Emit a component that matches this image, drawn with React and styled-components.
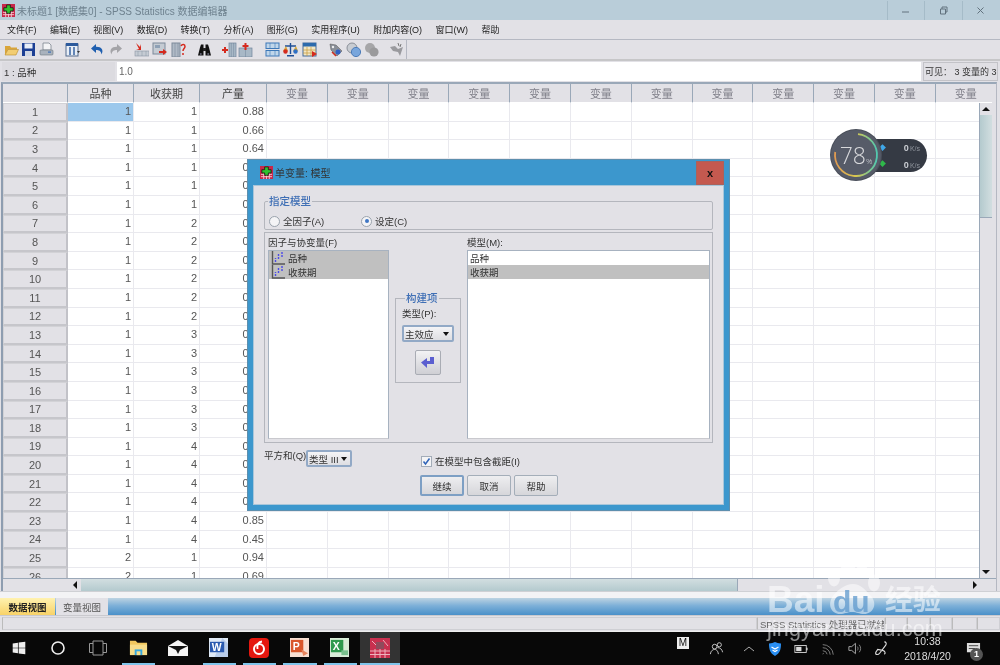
import React from 'react';
import styled, { createGlobalStyle } from 'styled-components';

const Global = createGlobalStyle`
  html, body { margin: 0; padding: 0; background: #e2e1e6; }
  * { box-sizing: border-box; }
`;
const CJK = `"Liberation Sans", "Noto Sans CJK SC", sans-serif`;

const Page = styled.div`
  position: relative; width: 1000px; height: 665px; overflow: hidden;
  display: flex; flex-direction: column; background: #e2e1e6;
  font-family: ${CJK}; filter: blur(0.45px);
`;
const TitleBar = styled.div`
  height: 20px; background: #b9cdd9; display: flex; align-items: center; padding-left: 2px; flex: none;
`;
const TitleText = styled.span`
  margin-left: 2px; font-size: 10px; color: #6f828f; white-space: nowrap;
`;
const WinButtons = styled.div`margin-left: auto; display: flex; height: 19px; padding-right: 1px;`;
const WinButton = styled.div`
  width: 37.5px; display: flex; align-items: center; justify-content: center;
  border-left: 1px solid #a5bbc8;
`;
const MenuBar = styled.div`
  height: 20px; flex: none; display: flex; align-items: center; gap: 13.4px; padding-left: 7px;
  border-bottom: 1px solid #b5b8c2; background: #e2e1e6;
`;
const MenuItem = styled.span`font-size: 9px; color: #222; white-space: nowrap;`;
const ToolBar = styled.div`
  height: 21px; flex: none; display: flex; align-items: center; padding-left: 4px;
  background: #e2e1e6; border-bottom: 2px solid #c6c6c8;
`;
const ToolIcon = styled.svg`width: 15px; height: 15px; flex: none; margin-left: ${p => p.$gap}px;`;
const ToolEnd = styled.div`width: 1px; height: 19px; background: #b5b8c2; margin-left: 2px;`;
const FormulaBar = styled.div`
  height: 21px; flex: none; display: flex; gap: 2px; padding: 1px 2px 1px 2px;
`;
const CellName = styled.div`
  width: 113px; background: #dcdbe0; font-size: 9.5px; color: #333; padding-left: 2px;
  display: flex; align-items: center;
`;
const CellValue = styled.div`
  flex: 1; background: #fff; font-size: 10px; color: #666; padding-left: 2px; display: flex; align-items: center;
`;
const VisibleInfo = styled.div`
  width: 75px; background: #e0dfe4; border: 1px solid #c3c3c8; font-size: 9px; color: #333;
  display: flex; align-items: center; padding-left: 1px; white-space: nowrap; overflow: hidden;
`;
const GridArea = styled.div`
  height: 509px; flex: none; margin-left: 1px; margin-right: 3px; overflow: hidden;
  border-top: 2px solid #9aa8b8; border-left: 2px solid #8e9db0; border-right: 1px solid #b5b8c2;
  display: flex; flex-direction: column; background: #e2e1e6;
`;
const HeadRow = styled.div`display: flex; height: 19px; flex: none; overflow: hidden; margin-right: 4px;`;
const HeadCell = styled.div`
  flex: none; width: ${p => p.$w}px; display: flex; align-items: center; justify-content: center;
  font-size: 11px; color: ${p => (p.$muted ? '#80808a' : '#444')};
  border-right: 1px solid #9aa8b8; border-bottom: 1px solid #fff; background: #e2e1e6;
`;
const BodyRow = styled.div`display: flex; flex: 1; min-height: 0;`;
const Table = styled.div`flex: 1; overflow: hidden; background: #fff;`;
const Row = styled.div`display: flex; height: 18.6px;`;
const RowHead = styled.div`
  flex: none; width: 65px; background: #e2e1e6; border: 1px solid #d2d2d6; border-right: 2px solid #c2c2c8; border-bottom: 2px solid #c6c6cb;
  font-size: 11px; color: #555; display: flex; align-items: center; justify-content: center;
`;
const Cell = styled.div`
  flex: none; width: ${p => p.$w}px; padding-right: 2px; text-align: right;
  font-size: 11px; line-height: 17.5px; color: #555;
  background: ${p => (p.$sel ? '#9cc8ec' : '#fff')};
  border-right: 1px solid #e9e9ee; border-bottom: 1px solid #e9e9ee;
`;
const VScroll = styled.div`
  width: 13px; flex: none; display: flex; flex-direction: column; background: #e2e1e6;
  border-left: 1px solid #9aa8b8; margin-right: 4px;
`;
const Arrow = styled.div`
  flex: none; width: ${p => p.$w || 12}px; height: ${p => p.$h || 12}px; display: flex; align-items: center; justify-content: center;
  background: #e2e1e6; font-size: 0;
`;
const Tri = styled.svg`width: 8px; height: 8px;`;
const VThumb = styled.div`
  height: 103px; flex: none; background: linear-gradient(90deg, #b4cace, #d2dee0);
  border-bottom: 1px solid #9aa8b8; display: flex; align-items: center; justify-content: center;
`;
const Grip = styled.div`
  width: ${p => p.$w}px; height: ${p => p.$h}px; opacity: .8;
  background-image: radial-gradient(#8fa0a6 40%, transparent 45%); background-size: 2px 2px;
`;
const VTrack = styled.div`flex: 1;`;
const HScroll = styled.div`
  height: 13px; flex: none; display: flex; padding-left: 65px; border-top: 1px solid #9aa8b8; background: #e2e1e6;
`;
const HThumb = styled.div`
  width: 657px; background: linear-gradient(180deg, #d2dee0, #b4cace); border-right: 1px solid #9aa8b8;
  display: flex; align-items: center; justify-content: center;
`;
const HTrack = styled.div`flex: none; width: 231px;`;
const Strip = styled.div`height: 7px; flex: none; background: #f3f3f5; border-top: 1px solid #cfd0d4;`;
const TabBar = styled.div`
  height: 17px; flex: none; display: flex; background: linear-gradient(180deg, #bdd3e2 0%, #7db0d8 45%, #4a90c9 100%);
`;
const Tab = styled.div`
  width: ${p => p.$w}px; font-size: 9.5px; display: flex; align-items: center; justify-content: center;
  font-weight: ${p => (p.$on ? 700 : 400)}; color: ${p => (p.$on ? '#222' : '#555')};
  background: ${p => (p.$on ? 'linear-gradient(180deg,#fff2b0,#f8d268)' : '#e2e1e6')};
  margin-right: 1px;
`;
const StatusBar = styled.div`
  height: 17px; flex: none; display: flex; background: #e2e1e6; padding: 1px 0 1px 2px; border-top: 1px solid #c9c9ce;
  border-bottom: 1px solid #eee;
`;
const StatusCell = styled.div`
  width: ${p => p.$w}px; flex: ${p => (p.$w ? 'none' : 1)}; border: 1px solid #cfcfd4; border-left-color: #bbb;
  font-size: 9.5px; color: #666; padding-left: 2px; white-space: nowrap; overflow: hidden; display: flex; align-items: center;
`;
const Taskbar = styled.div`
  flex: 1; background: #080808; display: flex; align-items: stretch; position: relative;
`;
const Slot = styled.div`
  width: ${p => p.$w || 40.33}px; flex: none; display: flex; align-items: center; justify-content: center;
  position: relative; padding-bottom: 2px;
  background: ${p => (p.$active ? '#333' : 'transparent')};
  &::after {
    content: ''; position: absolute; bottom: 0; left: ${p => (p.$active ? 0 : 4)}px; right: ${p => (p.$active ? 0 : 3)}px; height: 2px;
    background: ${p => (p.$running ? '#7fc4ea' : 'transparent')};
  }
`;
const TaskIcon = styled.svg`width: ${p => p.$s || 20}px; height: ${p => p.$s || 20}px;`;
const Tray = styled.div`margin-left: auto; margin-right: 14px; display: flex; align-items: center; height: 100%;`;
const TrayItem = styled.div`
  width: ${p => p.$w}px; flex: none; display: flex; align-items: center; justify-content: center; height: 100%;
  position: relative;
`;
const MBox = styled.div`
  width: 12px; height: 12px; background: #eee; color: #111; font-size: 10px; line-height: 12px; text-align: center;
  margin-bottom: 11px; margin-right: 0;
`;
const Clock = styled.div`
  display: flex; flex-direction: column; align-items: center; color: #ddd; font-size: 10.5px; line-height: 15px; padding-top: 1px;
`;
const Badge = styled.div`
  position: absolute; right: 3px; bottom: 4px; width: 13px; height: 13px; border-radius: 50%; background: #555;
  color: #fff; font-size: 9px; font-weight: 700; line-height: 13px; text-align: center;
`;

/* dialog */
const Dialog = styled.div`
  position: absolute; left: 247px; top: 159px; width: 483px; height: 352px; background: #3c97cd;
  border: 1px solid #5d8fae; display: flex; flex-direction: column; padding: 0 5px 5px 5px;
`;
const DlgTitle = styled.div`height: 25px; flex: none; display: flex; align-items: center; padding-left: 7px;`;
const DlgTitleText = styled.span`margin-left: 2px; font-size: 10px; color: #333;`;
const DlgClose = styled.div`
  margin-left: auto; width: 28px; height: 24px; background: #c4594f; border: 1px solid #a9625c; display: flex; align-items: center; justify-content: center;
  font-size: 11px; font-weight: 700; color: #111;
`;
const DlgBody = styled.div`
  flex: 1; background: #e2e1e6; padding: 10px 10px 0 10px; display: flex; flex-direction: column;
  border: 1px solid #a8c6da;
`;
const Group = styled.fieldset`
  margin: 0; padding: 0; min-width: 0; border: 1px solid #b4b6bd; border-radius: 2px;
  height: ${p => p.$h}px;
`;
const Legend = styled.legend`
  padding: 0 1px; margin-left: 3px; font-size: 10.5px; line-height: 11px; color: #3f6fb5; font-weight: 500;
`;
const RadioRow = styled.div`display: flex; align-items: center; padding: 7px 0 0 4px;`;
const RadioLabel = styled.label`display: flex; align-items: center; gap: 3px; font-size: 9.5px; color: #333; width: ${p => p.$w}px;`;
const Radio = styled.span`
  width: 11px; height: 11px; border-radius: 50%; border: 1px solid #9aa3ad; background: #f4f4f6; display: flex; align-items: center; justify-content: center;
  &::after { content: ''; width: 4px; height: 4px; border-radius: 50%; background: ${p => (p.$on ? '#3f76c4' : 'transparent')}; }
`;
const Panel = styled.div`
  margin-top: 2px; height: 211px; flex: none; border: 1px solid #b4b6bd; padding: 4px 3px 3px 3px;
  display: grid; grid-template-columns: 121px 78px 243px;
`;
const Col = styled.div`display: flex; flex-direction: column; min-height: 0;`;
const SmallLabel = styled.div`font-size: 9.5px; line-height: 12px; color: #333; white-space: nowrap;`;
const ListBox = styled.div`
  flex: 1; margin-top: 1px; background: #fff; border: 1px solid #a7b2c0; border-bottom-color: #c9c9ce;
`;
const ListRow = styled.div`
  height: 14px; display: flex; align-items: center; gap: 2px; padding-left: 2px; font-size: 9.5px; color: #333;
  background: ${p => (p.$sel ? '#c0c0c0' : '#fff')};
`;
const MidCol = styled.div`padding: 56px 6px 0 6px; display: flex; flex-direction: column;`;
const BuildGroup = styled.fieldset`
  margin: 0; padding: 4px 6px 0 6px; min-width: 0; height: 90px; border: 1px solid #b4b6bd;
  display: flex; flex-direction: column; align-items: stretch;
`;
const Select = styled.div`
  width: ${p => p.$w}px; height: 17px; flex: none; margin-top: ${p => p.$mt || 0}px; border: 2px solid #92a9c6; border-radius: 2px; background: linear-gradient(180deg,#f4f4f6,#dedee2);
  font-size: 9.5px; color: #333; display: flex; align-items: center; padding: 0 3px 0 1px; justify-content: space-between; white-space: nowrap;
`;
const DownTri = styled.span`
  width: 0; height: 0; border-left: 3.5px solid transparent; border-right: 3.5px solid transparent; border-top: 4px solid #111;
`;
const ArrowBtn = styled.div`
  width: 26px; height: 25px; align-self: center; margin-top: 8px; border: 1px solid #a9acb4; border-radius: 2px;
  background: linear-gradient(180deg,#f2f2f4,#cfcfd4); display: flex; align-items: center; justify-content: center;
`;
const BottomRow = styled.div`display: flex; margin-top: 7px; height: 25px;`;
const SumLabel = styled.div`font-size: 9.5px; line-height: 12px; color: #333; width: 42px; white-space: nowrap;`;
const CheckWrap = styled.label`
  margin-left: 69px; margin-top: 5px; display: flex; align-items: center; gap: 3px; font-size: 9.5px; color: #333; height: 12px;
`;
const Check = styled.span`
  width: 11px; height: 11px; border: 1px solid #a3acb8; background: #f4f4f6; display: flex; align-items: center; justify-content: center;
`;
const ButtonRow = styled.div`display: flex; gap: 3px; padding-left: 156px;`;
const DlgButton = styled.div`
  width: ${p => p.$w || 44}px; height: 21px; border-radius: 2px; font-size: 9.5px; color: #333;
  border: ${p => (p.$def ? '2px solid #7d9fc4' : '1px solid #a4aeb9')};
  background: linear-gradient(180deg,#eeeef0,#d6d6da); display: flex; align-items: center; justify-content: center;
`;

/* widget + watermark */
const Widget = styled.div`position: absolute; left: 831px; top: 130px; width: 97px; height: 50px;`;
const Pill = styled.div`
  position: absolute; left: 29px; top: 9px; width: 67px; height: 33px; border-radius: 17px; background: #353a44;
  padding: 3px 7px 0 0; display: flex; flex-direction: column; align-items: flex-end; gap: 4px;
`;
const Speed = styled.div`display: flex; align-items: baseline; height: 13px; line-height: 13px; font-size: 9px; font-weight: 700; color: #c9ccd2;`;
const SpeedUnit = styled.span`font-size: 7px; font-weight: 400; color: #8f949c; margin-left: 1px;`;
const Dot = styled.span`position: absolute; left: 19px; top: ${p => p.$t}px; font-size: 7px; line-height: 8px; color: ${p => p.$c};`;
const Dial = styled.div`
  position: absolute; left: 0; top: 0; width: 50px; height: 50px; border-radius: 50%; background: #565b68;
  box-shadow: 0 0 0 1px #4a4f5a;
  color: #d8d9dc; display: flex; align-items: baseline; justify-content: center; line-height: 50px; font-size: 23px; font-family: "Open Sans", "Liberation Sans", sans-serif; font-weight: 300;
`;
const DialPct = styled.span`font-size: 8px;`;
const DialRing = styled.svg`position: absolute; left: 0; top: 0; width: 50px; height: 50px;`;
const Mark = styled.div`position: absolute; left: 0; top: 0; width: 100%; height: 100%; pointer-events: none; color: rgba(255,255,255,.55);`;
const MarkBai = styled.span`position: absolute; left: 767px; top: 581px; font: 700 37px/37px "Liberation Sans", sans-serif;`;
const MarkDu = styled.span`position: absolute; left: 833px; top: 587px; font: 700 30px/30px "Liberation Sans", sans-serif; color: rgba(94,152,204,.75);`;
const MarkCn = styled.span`position: absolute; left: 885px; top: 584px; font: 700 28px/28px "Noto Sans CJK SC", sans-serif;`;
const MarkUrl = styled.span`position: absolute; left: 767px; top: 617px; font: 400 21.5px/25px "Liberation Sans", sans-serif; letter-spacing: .15px;`;
const MarkPaw = styled.svg`position: absolute; left: 826px; top: 556px; width: 56px; height: 60px;`;

const AppLogo = ({ s = 13 }) => (
  <svg width={s} height={s} viewBox="0 0 14 14" style={{ flex: 'none' }}>
    <rect width="14" height="14" fill="#c8274a" />
    <path d="M1 9h12M1 11.5h12M4 8v6M7 8v6M10 8v6" stroke="#f4c9d0" strokeWidth="1" />
    <path d="M5 1h4v3h3v3.5H9V10H5V7.5H2V4h3z" fill="#2fc22f" stroke="#111" strokeWidth=".8" />
  </svg>
);
const VarIcon = () => (
  <svg width="15" height="14" viewBox="0 0 15 14" style={{ flex: 'none' }}>
    <path d="M1.5 0v13H14" stroke="#555" strokeWidth="1.4" fill="none" />
    <path d="M4.500 11V7M7.500 8V3M11 6V1" stroke="#4a4ae8" strokeWidth="1.400" strokeDasharray="2 1" />
  </svg>
);

const menus = ['文件(F)', '编辑(E)', '视图(V)', '数据(D)', '转换(T)', '分析(A)', '图形(G)', '实用程序(U)', '附加内容(O)', '窗口(W)', '帮助'];
const tools = [
  { g: 0, el: <><path d="M1 4h5l1 1.5h6v2H4L1 13z" fill="#d9a53a" /><path d="M4 7.5h10.5L12 13H1z" fill="#f2cd72" stroke="#b98a2a" strokeWidth=".6" /></> },
  { g: 2, el: <><rect x="1" y="1" width="13" height="13" fill="#1c3f94" /><rect x="3.5" y="1.5" width="8" height="5" fill="#e8eef8" /><rect x="4" y="9" width="7" height="5" fill="#cfd6e4" /></> },
  { g: 3, el: <><path d="M4 1h6l2 2v5H4z" fill="#f4f4f6" stroke="#7d8590" strokeWidth=".8" /><rect x="1" y="8" width="13" height="5" rx="1" fill="#a9b2bd" stroke="#6d7580" strokeWidth=".6" /><rect x="9" y="9.5" width="3" height="1.2" fill="#3f6fb5" /></> },
  { g: 11, el: <><rect x="1" y="2" width="12" height="12" fill="#e8eef6" stroke="#536a8c" /><rect x="1" y="1" width="12" height="3" fill="#2c5a9c" /><path d="M5 5v8M9 5v8" stroke="#2c5a9c" strokeWidth="1.4" /><path d="M12 9h3l-1.5 2z" fill="#333" /></> },
  { g: 10, el: <path d="M6 2 1 6.5 6 11V8c3 0 5 .8 5.5 4.5C14 8 11.5 4.6 6 4.8z" fill="#1f5fb0" /> },
  { g: 3, el: <path d="M9 2l5 4.5L9 11V8C6 8 4 8.8 3.5 12.5 1 8 3.5 4.6 9 4.8z" fill="#a4a4a8" /> },
  { g: 11, el: <><path d="M2 1l4 4 1-3v6H2l3-1z" fill="#d52a1e" /><rect x="1" y="9" width="14" height="5" fill="#c5cbd3" stroke="#8a95a3" strokeWidth=".6" /><path d="M4 9v5M8 9v5M12 9v5" stroke="#8a95a3" strokeWidth=".5" /></> },
  { g: 3, el: <><rect x="1" y="1" width="12" height="11" fill="#c5cbd3" stroke="#7c8a9a" /><rect x="3" y="3" width="5" height="3" fill="#8ea0b5" /><path d="M7 9h4V7l4 3-4 3v-2H7z" fill="#d52a1e" /></> },
  { g: 4, el: <><rect x="1" y="1" width="8" height="14" fill="#b0bac6" stroke="#7c8a9a" /><path d="M4 1v14M7 1v14" stroke="#7c8a9a" strokeWidth=".6" /><path d="M10 4c1-2 4-2 4 .5 0 2-2 2-2 4.500M12 11v2" fill="none" stroke="#d52a1e" strokeWidth="1.500" /></> },
  { g: 11, el: <><path d="M1 13.500l2-8 1-3h2.500v11zM14 13.500l-2-8-1-3H8.500v11z" fill="#111" /><rect x="6" y="6" width="3" height="3" fill="#222" /><circle cx="3.800" cy="12" r="1" fill="#667" /><circle cx="11.200" cy="12" r="1" fill="#667" /></> },
  { g: 10, el: <><rect x="7" y="1" width="7" height="14" fill="#a8b8c6" stroke="#71859a" strokeWidth=".7" /><path d="M9.3 1v14M11.6 1v14" stroke="#71859a" strokeWidth=".5" /><path d="M0 8h6M3 5v6" stroke="#d52a1e" strokeWidth="2" /></> },
  { g: 1, el: <><rect x="1" y="6" width="13" height="9" fill="#a8b8c6" stroke="#71859a" strokeWidth=".7" /><path d="M7.5 6v9" stroke="#71859a" strokeWidth=".5" /><path d="M7.5 1v7M4.5 4h6" stroke="#d52a1e" strokeWidth="2" /></> },
  { g: 12, el: <><rect x="1" y="1" width="13" height="5.5" fill="#c0d6ea" stroke="#3d78b8" /><rect x="1" y="8.5" width="13" height="5.5" fill="#c0d6ea" stroke="#3d78b8" /><path d="M5 1v5M10 1v5M5 8.5v5M10 8.5v5" stroke="#3d78b8" strokeWidth=".6" /></> },
  { g: 3, el: <><path d="M7.5 1v11M2 4h11" stroke="#1f4f96" strokeWidth="1.4" /><path d="M0 9h5L3 4zM10 9h5l-2-5z" fill="#d8a83a" /><path d="M4 13h7v1.5H4z" fill="#1f4f96" /><circle cx="2.5" cy="9.5" r="2.2" fill="#d52a1e" /><circle cx="12.5" cy="9.5" r="2.2" fill="#2f6fc4" /></> },
  { g: 4, el: <><rect x="1" y="1" width="13" height="13" fill="#f3e6c3" stroke="#456d9c" /><rect x="1" y="1" width="13" height="3.5" fill="#2c6aac" /><path d="M1 8h13M1 11h13M5 5v9M9 5v9" stroke="#c49a3a" strokeWidth=".7" /><path d="M10 9l5 3-5 3z" fill="#d52a1e" /></> },
  { g: 11, el: <><path d="M2 2l6 1 6 6-5 5-6-6z" fill="#8a8f98" stroke="#555" strokeWidth=".5" /><circle cx="10" cy="10" r="2.5" fill="#2f5fc4" /><path d="M4 10l4 4" stroke="#d52a1e" strokeWidth="1.4" /><circle cx="5" cy="5" r="1.2" fill="#eee" /></> },
  { g: 3, el: <><circle cx="6" cy="6" r="5" fill="#c8ccd2" stroke="#8a8f98" /><circle cx="10" cy="10" r="4.6" fill="#79a6dc" stroke="#4d7cb8" /></> },
  { g: 3, el: <><circle cx="6" cy="6" r="5" fill="#a6a6a8" /><circle cx="10" cy="10" r="4.6" fill="#9a9a9c" /></> },
  { g: 10, el: <><path d="M1 5l5-1 3 3 5-2-3 9-2-4-5-1z" fill="#9a9a9e" /><path d="M9 1l1 3M12 2l-1 3" stroke="#777" strokeWidth="1" /></> },
];

const sizes = [65, 66, 66, 67];
const varW = 60.8;
const yields = ['0.88', '0.66', '0.64', '0.74', '0.62', '0.58', '0.71', '0.66', '0.69', '0.78', '0.61', '0.77', '0.75', '0.72', '0.81', '0.68', '0.73', '0.74', '0.83', '0.65', '0.79', '0.76', '0.85', '0.45', '0.94', '0.69'];
const rows = yields.map((v, i) => ({
  a: i < 24 ? 1 : 2,
  b: i < 24 ? Math.floor(i / 6) + 1 : 1,
  c: v,
}));

const TriUp = () => <Tri viewBox="0 0 8 8"><path d="M0 6h8L4 2z" fill="#111" /></Tri>;
const TriDown = () => <Tri viewBox="0 0 8 8"><path d="M0 2h8L4 6z" fill="#111" /></Tri>;
const TriLeft = () => <Tri viewBox="0 0 8 8"><path d="M6 0v8L2 4z" fill="#111" /></Tri>;
const TriRight = () => <Tri viewBox="0 0 8 8"><path d="M2 0v8l4-4z" fill="#111" /></Tri>;

export default function App() {
  return (
    <Page>
      <Global />
      <TitleBar>
        <AppLogo />
        <TitleText>未标题1 [数据集0] - SPSS Statistics 数据编辑器</TitleText>
        <WinButtons>
          <WinButton><svg width="9" height="9" viewBox="0 0 9 9"><path d="M1 6h7" stroke="#62727e" /></svg></WinButton>
          <WinButton><svg width="9" height="9" viewBox="0 0 9 9"><path d="M1.5 3h5v5h-5zM3 3V1h5v5H6.5" fill="none" stroke="#62727e" /></svg></WinButton>
          <WinButton><svg width="9" height="9" viewBox="0 0 9 9"><path d="M1.5 1.5l6 6M7.5 1.5l-6 6" stroke="#62727e" /></svg></WinButton>
        </WinButtons>
      </TitleBar>
      <MenuBar>{menus.map(m => <MenuItem key={m}>{m}</MenuItem>)}</MenuBar>
      <ToolBar>
        {tools.map((t, i) => <ToolIcon key={i} viewBox="0 0 15 15" $gap={t.g}>{t.el}</ToolIcon>)}
        <ToolEnd />
      </ToolBar>
      <FormulaBar>
        <CellName>1 : 品种</CellName>
        <CellValue>1.0</CellValue>
        <VisibleInfo>可见： 3 变量的 3</VisibleInfo>
      </FormulaBar>
      <GridArea>
        <HeadRow>
          <HeadCell $w={sizes[0]} />
          <HeadCell $w={sizes[1]}>品种</HeadCell>
          <HeadCell $w={sizes[2]}>收获期</HeadCell>
          <HeadCell $w={sizes[3]}>产量</HeadCell>
          {Array.from({ length: 12 }, (_, i) => <HeadCell key={i} $w={varW} $muted>变量</HeadCell>)}
        </HeadRow>
        <BodyRow>
          <Table>
            {rows.map((r, i) => (
              <Row key={i}>
                <RowHead>{i + 1}</RowHead>
                <Cell $w={sizes[1]} $sel={i === 0}>{r.a}</Cell>
                <Cell $w={sizes[2]}>{r.b}</Cell>
                <Cell $w={sizes[3]}>{r.c}</Cell>
                {Array.from({ length: 12 }, (_, k) => <Cell key={k} $w={varW} />)}
              </Row>
            ))}
          </Table>
          <VScroll>
            <Arrow><TriUp /></Arrow>
            <VThumb><Grip $w={8} $h={12} /></VThumb>
            <VTrack />
            <Arrow><TriDown /></Arrow>
          </VScroll>
        </BodyRow>
        <HScroll>
          <Arrow $w={13}><TriLeft /></Arrow>
          <HThumb><Grip $w={12} $h={8} /></HThumb>
          <HTrack />
          <Arrow $w={12}><TriRight /></Arrow>
        </HScroll>
      </GridArea>
      <Strip />
      <TabBar>
        <Tab $w={55} $on>数据视图</Tab>
        <Tab $w={52}>变量视图</Tab>
      </TabBar>
      <StatusBar>
        <StatusCell />
        <StatusCell $w={128}>SPSS Statistics  处理器已就绪</StatusCell>
        <StatusCell $w={22} />
        <StatusCell $w={23} />
        <StatusCell $w={22} />
        <StatusCell $w={25} />
        <StatusCell $w={23} />
      </StatusBar>
      <Taskbar>
        <Slot $w={38}>
          <TaskIcon viewBox="0 0 20 20" $s={14}><path d="M1 3.5l7.5-1V9.500H1zM9.500 2.300L19 1v8.500H9.500zM1 10.500h7.500v7L1 16.500zM9.500 10.500H19V19l-9.500-1.300z" fill="#eee" /></TaskIcon>
        </Slot>
        <Slot $w={40}>
          <TaskIcon viewBox="0 0 20 20" $s={16}><circle cx="10" cy="10" r="7.5" fill="none" stroke="#eee" strokeWidth="2" /></TaskIcon>
        </Slot>
        <Slot $w={40}>
          <TaskIcon viewBox="0 0 20 20" $s={20}><path d="M5 3h10v14H5zM5 5.500H1.500v9H5M15 5.500h3.500v9H15" fill="none" stroke="#999" strokeWidth="1" /></TaskIcon>
        </Slot>
        <Slot $running>
          <TaskIcon viewBox="0 0 20 20" $s={19}><path d="M1 3h6l2 2h10v13H1z" fill="#f0c75e" /><rect x="1" y="7" width="18" height="11" fill="#f7dd8a" /><rect x="6" y="12" width="8" height="6" fill="#35a7e0" /><rect x="8" y="14" width="4" height="4" fill="#f7dd8a" /></TaskIcon>
        </Slot>
        <Slot>
          <TaskIcon viewBox="0 0 20 20" $s={20}><path d="M0 8l10-6 10 6v10H0z" fill="#f4f4f4" /><path d="M0 8l20 0-8 4-2 4-2-4z" fill="#111" /></TaskIcon>
        </Slot>
        <Slot $running>
          <TaskIcon viewBox="0 0 20 20" $s={19}><rect width="20" height="20" fill="#dfe9f6" /><path d="M14 0l6 6v14H6z" fill="#b9cdea" /><path d="M1 4h15v11H1z" fill="#2a5ab0" /><text x="3" y="13.500" fontSize="11" fontWeight="700" fill="#fff" fontFamily="Liberation Sans">W</text></TaskIcon>
        </Slot>
        <Slot $running>
          <TaskIcon viewBox="0 0 20 20" $s={20}><rect width="20" height="20" rx="4" fill="#e5170f" /><circle cx="10" cy="11" r="5" fill="none" stroke="#fff" strokeWidth="2" /><path d="M13 3.500C9 4 8 7 8.500 11" fill="none" stroke="#fff" strokeWidth="1.800" /></TaskIcon>
        </Slot>
        <Slot $running>
          <TaskIcon viewBox="0 0 20 20" $s={19}><rect width="20" height="20" fill="#f8dfd2" /><path d="M1 2h13v13H1z" fill="#d9562a" /><text x="3" y="12.500" fontSize="11" fontWeight="700" fill="#fff" fontFamily="Liberation Sans">P</text><path d="M12 12l7 4-5 3z" fill="#e8865f" /></TaskIcon>
        </Slot>
        <Slot $running>
          <TaskIcon viewBox="0 0 20 20" $s={19}><rect width="20" height="20" fill="#d8ecd8" /><path d="M1 2h13v13H1z" fill="#2f9a4e" /><text x="3" y="12.500" fontSize="11" fontWeight="700" fill="#fff" fontFamily="Liberation Sans">X</text><path d="M12 13h7v5h-7z" fill="#79c08e" /></TaskIcon>
        </Slot>
        <Slot $active $running>
          <TaskIcon viewBox="0 0 20 20" $s={20}><rect width="20" height="20" fill="#c8304f" /><path d="M0 13h20M0 16.500h20M5 11v9M10 11v9M15 11v9M2 3l5 5M13 2l5 6" stroke="#eeb3bd" strokeWidth="1" /><rect x="6" y="4" width="8" height="7" fill="#8f4b5c" /></TaskIcon>
        </Slot>
        <Tray>
          <TrayItem $w={30}><MBox>M</MBox></TrayItem>
          <TrayItem $w={37}><TaskIcon viewBox="0 0 16 16" $s={15}><circle cx="6" cy="6" r="2.500" fill="none" stroke="#ccc" /><circle cx="11" cy="4" r="2.200" fill="none" stroke="#ccc" /><path d="M1.500 14c.5-4 3-5 4.500-5s3.500 1 4 5M9 7c3 0 5 2 5.500 5" fill="none" stroke="#ccc" /></TaskIcon></TrayItem>
          <TrayItem $w={27}><TaskIcon viewBox="0 0 12 12" $s={12}><path d="M1 8l5-4 5 4" fill="none" stroke="#aaa" /></TaskIcon></TrayItem>
          <TrayItem $w={25}><TaskIcon viewBox="0 0 16 16" $s={16}><path d="M2 2.500c3 0 4-1 6-1.500 2 .5 3 1.500 6 1.500 0 6-1 9.500-6 12.500-5-3-6-6.500-6-12.500z" fill="#2a8ff2" /><path d="M4.500 6l3.500 2 3.500-2M5.500 9l2.500 1.500L10.500 9" fill="none" stroke="#fff" strokeWidth="1.200" /></TaskIcon></TrayItem>
          <TrayItem $w={27}><TaskIcon viewBox="0 0 16 16" $s={14}><rect x="1" y="4" width="13" height="8" fill="none" stroke="#ddd" /><rect x="2.500" y="5.500" width="6" height="5" fill="#ddd" /><rect x="14" y="6.500" width="1.500" height="3" fill="#ddd" /></TaskIcon></TrayItem>
          <TrayItem $w={27}><TaskIcon viewBox="0 0 16 16" $s={14}><path d="M2 14a1 1 0 0 1 1-1M2 10a5 5 0 0 1 5 4M2 6.500a8.500 8.500 0 0 1 8.500 8M2 3a12 12 0 0 1 12 11.500" fill="none" stroke="#888" strokeWidth="1" /></TaskIcon></TrayItem>
          <TrayItem $w={26}><TaskIcon viewBox="0 0 16 16" $s={15}><path d="M2 6h3l4-3.500v11L5 10H2z" fill="none" stroke="#aaa" /><path d="M11 6c1 1 1 3 0 4M13 4c2 2 2 6 0 8" fill="none" stroke="#888" /></TaskIcon></TrayItem>
          <TrayItem $w={28}><TaskIcon viewBox="0 0 18 18" $s={17}><path d="M12 2c2 0 2.500 2 1.500 3.500L7 14c-1.500 2-5 2-4-1l2-3 5 1c3 .5 3.500 3 2 4" fill="none" stroke="#ddd" strokeWidth="1.200" /></TaskIcon></TrayItem>
          <TrayItem $w={65}><Clock><span>10:38</span><span>2018/4/20</span></Clock></TrayItem>
          <TrayItem $w={26}>
            <TaskIcon viewBox="0 0 16 16" $s={15}><path d="M1 2h14v10H7l-2 2v-2H1z" fill="#ddd" /><path d="M3 5h10M3 8h7" stroke="#444" /></TaskIcon>
            <Badge>1</Badge>
          </TrayItem>
        </Tray>
      </Taskbar>

      <Widget>
        <Pill>
          <Speed>0<SpeedUnit>K/s</SpeedUnit></Speed>
          <Speed>0<SpeedUnit>K/s</SpeedUnit></Speed>
          <Dot $t={5} $c="#3fa7e8">◆</Dot>
          <Dot $t={21} $c="#2fb84a">◆</Dot>
        </Pill>
        <Dial>78<DialPct>%</DialPct></Dial>
        <DialRing viewBox="0 0 50 50">
          <defs>
            <linearGradient id="ring" x1="0" y1="0.5" x2="1" y2="0.5">
              <stop offset="0" stopColor="#e09a50" />
              <stop offset=".5" stopColor="#d8c850" />
              <stop offset="1" stopColor="#50c8b0" />
            </linearGradient>
          </defs>
          <path d="M27 4.100A21 21 0 1 1 4.200 22" fill="none" stroke="url(#ring)" strokeWidth="1.800" />
        </DialRing>
      </Widget>

      <Dialog>
        <DlgTitle>
          <AppLogo />
          <DlgTitleText>单变量: 模型</DlgTitleText>
          <DlgClose>x</DlgClose>
        </DlgTitle>
        <DlgBody>
          <Group $h={34}>
            <Legend>指定模型</Legend>
            <RadioRow>
              <RadioLabel $w={92}><Radio />全因子(A)</RadioLabel>
              <RadioLabel><Radio $on />设定(C)</RadioLabel>
            </RadioRow>
          </Group>
          <Panel>
            <Col>
              <SmallLabel>因子与协变量(F)</SmallLabel>
              <ListBox>
                <ListRow $sel><VarIcon />品种</ListRow>
                <ListRow $sel><VarIcon />收获期</ListRow>
              </ListBox>
            </Col>
            <MidCol>
              <BuildGroup>
                <Legend>构建项</Legend>
                <SmallLabel>类型(P):</SmallLabel>
                <Select $w={52} $mt={5}>主效应<DownTri /></Select>
                <ArrowBtn>
                  <svg width="14" height="12" viewBox="0 0 14 12"><path d="M9 0h4v7H6v4L0 5.500 6 1v3h3z" fill="#5b5fd0" /></svg>
                </ArrowBtn>
              </BuildGroup>
            </MidCol>
            <Col>
              <SmallLabel>模型(M):</SmallLabel>
              <ListBox>
                <ListRow>品种</ListRow>
                <ListRow $sel>收获期</ListRow>
              </ListBox>
            </Col>
          </Panel>
          <BottomRow>
            <SumLabel>平方和(Q)</SumLabel>
            <Select $w={46}>类型 III<DownTri /></Select>
            <CheckWrap>
              <Check><svg width="9" height="9" viewBox="0 0 9 9"><path d="M1.500 4.500l2 2.500 4-5.500" fill="none" stroke="#2f63b8" strokeWidth="1.500" /></svg></Check>
              在模型中包含截距(I)
            </CheckWrap>
          </BottomRow>
          <ButtonRow>
            <DlgButton $def>继续</DlgButton>
            <DlgButton>取消</DlgButton>
            <DlgButton>帮助</DlgButton>
          </ButtonRow>
        </DlgBody>
      </Dialog>

      <Mark>
        <MarkPaw viewBox="0 0 56 60">
          <g fill="rgba(255,255,255,.5)">
            <ellipse cx="8" cy="22" rx="6" ry="8.500" />
            <ellipse cx="22" cy="11" rx="7" ry="10" />
            <ellipse cx="36" cy="12" rx="5" ry="8" />
            <ellipse cx="48" cy="27" rx="6" ry="8.500" />
            <path d="M27 28c8 0 12 6 18 12 7 8 2 18-7 18-5 0-7-2-12-2s-7 2-12 2c-9 0-13-10-7-18 5-6 12-12 20-12z" />
          </g>
        </MarkPaw>
        <MarkBai>Bai</MarkBai>
        <MarkDu>du</MarkDu>
        <MarkCn>经验</MarkCn>
        <MarkUrl>jingyan.baidu.com</MarkUrl>
      </Mark>
    </Page>
  );
}
